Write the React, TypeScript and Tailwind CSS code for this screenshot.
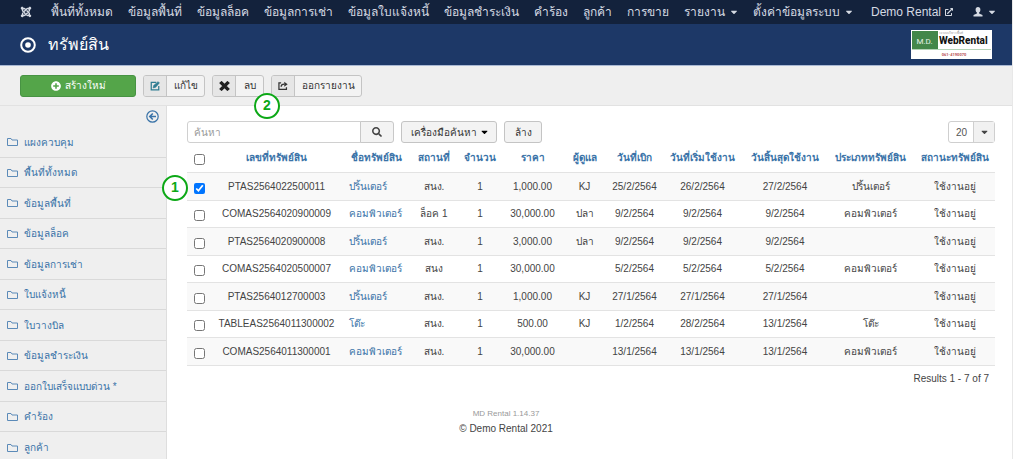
import { useState } from 'react';
import type { ReactNode } from 'react';
import { FaCaretDown, FaExternalLinkAlt, FaJoomla, FaPlusCircle, FaSearch } from 'react-icons/fa';

const navItems: { label: string; dropdown?: boolean }[] = [
  { label: 'พื้นที่ทั้งหมด' },
  { label: 'ข้อมูลพื้นที่' },
  { label: 'ข้อมูลล็อค' },
  { label: 'ข้อมูลการเช่า' },
  { label: 'ข้อมูลใบแจ้งหนี้' },
  { label: 'ข้อมูลชำระเงิน' },
  { label: 'คำร้อง' },
  { label: 'ลูกค้า' },
  { label: 'การขาย' },
  { label: 'รายงาน', dropdown: true },
  { label: 'ตั้งค่าข้อมูลระบบ', dropdown: true },
];

const sidebarItems = [
  'แผงควบคุม',
  'พื้นที่ทั้งหมด',
  'ข้อมูลพื้นที่',
  'ข้อมูลล็อค',
  'ข้อมูลการเช่า',
  'ใบแจ้งหนี้',
  'ใบวางบิล',
  'ข้อมูลชำระเงิน',
  'ออกใบเสร็จแบบด่วน *',
  'คำร้อง',
  'ลูกค้า',
];

const columns = [
  { label: 'เลขที่ทรัพย์สิน', width: 'w-[131px]' },
  { label: 'ชื่อทรัพย์สิน', width: 'w-[69px]' },
  { label: 'สถานที่', width: 'w-[46px]' },
  { label: 'จำนวน', width: 'w-[46px]' },
  { label: 'ราคา', width: 'w-[59px]' },
  { label: 'ผู้ดูแล', width: 'w-[45px]' },
  { label: 'วันที่เบิก', width: 'w-[55px]' },
  { label: 'วันที่เริ่มใช้งาน', width: 'w-[81px]' },
  { label: 'วันสิ้นสุดใช้งาน', width: 'w-[84px]' },
  { label: 'ประเภททรัพย์สิน', width: 'w-[87px]' },
  { label: 'สถานะทรัพย์สิน', width: 'w-[81px]' },
];

// code, name, place, amount, price, keeper, issued, start, end, type
const assets = [
  ['PTAS2564022500011', 'ปริ้นเตอร์', 'สนง.', '1', '1,000.00', 'KJ', '25/2/2564', '26/2/2564', '27/2/2564', 'ปริ้นเตอร์'],
  ['COMAS2564020900009', 'คอมพิวเตอร์', 'ล็อค 1', '1', '30,000.00', 'ปลา', '9/2/2564', '9/2/2564', '9/2/2564', 'คอมพิวเตอร์'],
  ['PTAS2564020900008', 'ปริ้นเตอร์', 'สนง.', '1', '3,000.00', 'ปลา', '9/2/2564', '9/2/2564', '9/2/2564', ''],
  ['COMAS2564020500007', 'คอมพิวเตอร์', 'สนง', '1', '30,000.00', '', '5/2/2564', '5/2/2564', '5/2/2564', 'คอมพิวเตอร์'],
  ['PTAS2564012700003', 'ปริ้นเตอร์', 'สนง.', '1', '1,000.00', 'KJ', '27/1/2564', '27/1/2564', '27/1/2564', ''],
  ['TABLEAS2564011300002', 'โต๊ะ', 'สนง.', '1', '500.00', 'KJ', '1/2/2564', '28/2/2564', '13/1/2564', 'โต๊ะ'],
  ['COMAS2564011300001', 'คอมพิวเตอร์', 'สนง.', '1', '30,000.00', '', '13/1/2564', '13/1/2564', '13/1/2564', 'คอมพิวเตอร์'],
];

function StepBadge({ step, className }: { step: number; className: string }) {
  return (
    <span
      className={`absolute z-10 flex h-[26px] w-[26px] items-center justify-center rounded-full border-2 border-[#0ca816] bg-white pb-[2px] text-[14px] leading-none font-bold text-[#0ca816] ${className}`}
    >
      {step}
    </span>
  );
}

function ToolbarButton({ icon, label, width }: { icon: ReactNode; label: string; width: string }) {
  return (
    <button
      type="button"
      className={`flex h-[22px] overflow-hidden rounded-[3px] border border-[#c4c4c4] bg-[#f3f3f3] text-[10px] text-[#333] ${width}`}
    >
      <span className="flex h-full w-[23px] items-center justify-center border-r border-[#c4c4c4] bg-[#e6e6e6]">
        {icon}
      </span>
      <span className="flex h-full flex-1 items-center justify-center whitespace-nowrap">{label}</span>
    </button>
  );
}

function EditIcon() {
  return (
    <svg className="h-[10px] w-[10px]" viewBox="0 0 16 16" fill="none" stroke="#2f7d92" strokeWidth="2">
      <path d="M10 2H2v12h12V8" />
      <path d="M5 11l1-4 7-6 2 2-6 7z" fill="#2f7d92" strokeWidth="1" />
    </svg>
  );
}

function DeleteIcon() {
  return (
    <svg className="h-[10px] w-[11px]" viewBox="0 0 16 16" preserveAspectRatio="none" stroke="#222" strokeWidth="5">
      <path d="M2 1.500l12 13M14 1.500l-12 13" />
    </svg>
  );
}

function ExportIcon() {
  return (
    <svg className="h-[10px] w-[10px]" viewBox="0 0 16 16" fill="none" stroke="#333" strokeWidth="2">
      <path d="M5 3H1.500v10.500h12V10" />
      <path d="M5 9c0-3 2-4 5-4" />
      <path d="M10 1l5.500 4-5.500 4z" fill="#333" stroke="none" />
    </svg>
  );
}

function FolderIcon() {
  return (
    <svg className="h-[10px] w-[11px] shrink-0" viewBox="0 0 11 10" fill="none" stroke="#5b8ab8">
      <path d="M0.500 8.500v-7h3.500l1 1.500h5.500v5.500z" />
    </svg>
  );
}

function BackIcon() {
  return (
    <svg className="h-[13px] w-[13px]" viewBox="0 0 13 13" fill="none" stroke="#3a73a8">
      <circle cx="6.500" cy="6.500" r="5.700" strokeWidth="1.200" />
      <path d="M6.800 3.500l-3 3 3 3M4 6.500h6" strokeWidth="1.600" />
    </svg>
  );
}

function UserIcon() {
  return (
    <svg className="h-[10px] w-[10px]" viewBox="0 0 10 10" fill="#d5dae3">
      <path d="M5 0c1.500 0 2.400 1.100 2.400 2.700 0 1.200-.5 2.300-1.300 2.900v.9L9.500 8v1.500h-9V8l3.400-1.500v-.9C3.100 5 2.600 3.900 2.600 2.700 2.600 1.100 3.500 0 5 0z" />
    </svg>
  );
}

function Logo() {
  return (
    <svg className="h-[29px] w-[81px] text-[8px] font-['Roboto',sans-serif]" viewBox="0 0 81 29" role="img" aria-label="M.D. WebRental">
      <rect width="81" height="29" fill="#fff" />
      <rect x="1" y="1" width="26" height="18" fill="#43874a" />
      <path d="M1 19.500h79" stroke="#b5d3b8" />
      <text x="13.500" y="13.500" textAnchor="middle" fill="#e6f1e6">M.D.</text>
      <text x="28" y="3.500" fill="#999" className="text-[3px]">ระบบบริหารพื้นที่</text>
      <text x="28" y="14" fill="#111" className="text-[10px] font-extrabold">WebRental</text>
      <text x="43" y="25.500" textAnchor="middle" fill="#b65050" className="text-[4px] font-bold">061-4190070</text>
    </svg>
  );
}

export default function App() {
  const [selected, setSelected] = useState<string[]>(['PTAS2564022500011']);

  const toggle = (code: string) => {
    setSelected((prev) => (prev.includes(code) ? prev.filter((item) => item !== code) : [...prev, code]));
  };

  const toggleAll = () => {
    setSelected((prev) => (prev.length === assets.length ? [] : assets.map((asset) => asset[0])));
  };

  return (
    <div className="flex min-h-screen flex-col border-r border-[#e8e8e8] bg-white font-['Liberation_Sans',sans-serif] text-[10px] text-[#444]">
      <nav className="flex h-6 items-center justify-between overflow-hidden bg-[#13223c] pr-4 pl-5 text-[12px] whitespace-nowrap text-[#d5dae3]">
        <div className="flex items-center gap-[15px]">
          <a href="#" aria-label="Joomla" className="mr-1">
            <FaJoomla className="h-3 w-3" />
          </a>
          {navItems.map((item) => (
            <a key={item.label} href="#" className="flex items-center gap-[5px]">
              {item.label}
              {item.dropdown && <FaCaretDown className="h-[10px] w-[8px]" />}
            </a>
          ))}
        </div>
        <div className="flex items-center gap-5">
          <a href="#" className="flex items-center gap-1">
            Demo Rental
            <FaExternalLinkAlt className="h-2 w-2" />
          </a>
          <button type="button" aria-label="User" className="flex items-center gap-[5px]">
            <UserIcon />
            <FaCaretDown className="h-[10px] w-[8px]" />
          </button>
        </div>
      </nav>

      <header className="flex h-[42px] items-center justify-between border-b border-[#a9b8d3] bg-[#1d3867] px-5 text-white">
        <h1 className="flex items-center gap-3 text-[16px]">
          <svg className="h-4 w-4" viewBox="0 0 16 16">
            <circle cx="8" cy="8" r="6.800" fill="none" stroke="#fff" strokeWidth="2" />
            <circle cx="8" cy="8" r="2.800" fill="#fff" />
          </svg>
          ทรัพย์สิน
        </h1>
        <Logo />
      </header>

      <div className="flex h-10 items-center gap-[7px] border-b border-[#e2e2e2] bg-[#efefef] pl-5">
        <button
          type="button"
          className="flex h-[22px] w-[116px] items-center justify-center gap-1 rounded-[3px] border border-[#479343] bg-[#54a549] text-[10px] text-white"
        >
          <FaPlusCircle className="h-[10px] w-[10px]" />
          สร้างใหม่
        </button>
        <ToolbarButton icon={<EditIcon />} label="แก้ไข" width="w-[62px]" />
        <div className="relative">
          <ToolbarButton icon={<DeleteIcon />} label="ลบ" width="w-[52px]" />
          <StepBadge step={2} className="top-[18px] left-[42px]" />
        </div>
        <ToolbarButton icon={<ExportIcon />} label="ออกรายงาน" width="w-[91px]" />
      </div>

      <div className="flex flex-1">
        <aside className="w-[167px] shrink-0 border-r border-[#dedede] bg-[#efefef]">
          <div className="flex h-[21px] items-center justify-end pr-[7px]">
            <button type="button" aria-label="Hide sidebar">
              <BackIcon />
            </button>
          </div>
          <ul>
            {sidebarItems.map((item) => (
              <li key={item} className="h-[31px] border-b border-[#d9d9d9] last:border-b-0 even:h-[30px]">
                <a href="#" className="flex h-full items-center gap-[6px] pl-[7px] text-[#3a73a8]">
                  <FolderIcon />
                  {item}
                </a>
              </li>
            ))}
          </ul>
        </aside>

        <main className="min-w-0 flex-1 pt-[15px] pr-[17px] pl-5">
          <div className="flex items-center justify-between">
            <form className="flex" onSubmit={(e) => e.preventDefault()}>
              <input
                type="text"
                aria-label="ค้นหา"
                placeholder="ค้นหา"
                className="h-[22px] w-[174px] rounded-l-[3px] border border-[#d0d0d0] px-[6px] text-[10px] placeholder:text-[#999]"
              />
              <button
                type="submit"
                aria-label="Search"
                className="-ml-px flex h-[22px] w-[34px] items-center justify-center rounded-r-[3px] border border-[#c8c8c8] bg-[#f3f3f3]"
              >
                <FaSearch className="h-[10px] w-[10px] text-[#444]" />
              </button>
              <button
                type="button"
                className="ml-[7px] flex h-[22px] w-[96px] items-center justify-center gap-1 rounded-[3px] border border-[#c4c4c4] bg-[#f3f3f3] text-[10px] text-[#333]"
              >
                เครื่องมือค้นหา
                <FaCaretDown className="h-[10px] w-[7px] text-black" />
              </button>
              <button
                type="button"
                className="ml-[7px] h-[22px] w-[38px] rounded-[3px] border border-[#c4c4c4] bg-[#f3f3f3] text-[10px] text-[#333]"
              >
                ล้าง
              </button>
            </form>
            <div className="relative">
              <select
                aria-label="Rows per page"
                defaultValue="20"
                className="h-[22px] w-[47px] appearance-none rounded-[3px] border border-[#cfcfcf] bg-white pl-[7px] text-[10px] text-[#555]"
              >
                <option>5</option>
                <option>10</option>
                <option>20</option>
                <option>50</option>
              </select>
              <span className="pointer-events-none absolute top-px right-px bottom-px flex w-[21px] items-center justify-center border-l border-[#cfcfcf] bg-[#f1f1f1]">
                <FaCaretDown className="h-[10px] w-[7px] text-[#444]" />
              </span>
            </div>
          </div>

          <table className="w-full table-fixed border-collapse text-center whitespace-nowrap">
            <thead>
              <tr className="h-[29px]">
                <th className="w-6 p-0 pt-1">
                  <input
                    type="checkbox"
                    aria-label="Select all"
                    checked={selected.length === assets.length}
                    onChange={toggleAll}
                    className="mx-auto block h-[11px] w-[11px]"
                  />
                </th>
                {columns.map((column) => (
                  <th key={column.label} className={`p-0 ${column.width}`}>
                    <a href="#" className="font-bold text-[#3a73a8]">
                      {column.label}
                    </a>
                  </th>
                ))}
              </tr>
            </thead>
            <tbody>
              {assets.map((asset, row) => (
                <tr key={asset[0]} className="h-7 border-y border-[#e3e3e3] odd:bg-[#f9f9f9] even:h-[27px]">
                  <td className="relative p-0 pt-1">
                    {row === 0 && <StepBadge step={1} className="top-[2px] -left-[25px]" />}
                    <input
                      type="checkbox"
                      aria-label={asset[0]}
                      checked={selected.includes(asset[0])}
                      onChange={() => toggle(asset[0])}
                      className="mx-auto block h-[11px] w-[11px]"
                    />
                  </td>
                  {asset.map((value, index) =>
                    index === 1 ? (
                      <td key={index} className="p-0 pl-[7px] text-left">
                        <a href="#" className="text-[#3a73a8]">
                          {value}
                        </a>
                      </td>
                    ) : (
                      <td key={index} className="p-0">
                        {value}
                      </td>
                    )
                  )}
                  <td className="p-0">ใช้งานอยู่</td>
                </tr>
              ))}
            </tbody>
          </table>

          <p className="mt-1 pr-[6px] text-right leading-[18px]">Results 1 - 7 of 7</p>

          <footer className="mt-[18px] pr-[170px] text-center">
            <p className="text-[8px] leading-4 text-[#999]">MD Rental 1.14.37</p>
            <p className="leading-[14px]">© Demo Rental 2021</p>
          </footer>
        </main>
      </div>
    </div>
  );
}
